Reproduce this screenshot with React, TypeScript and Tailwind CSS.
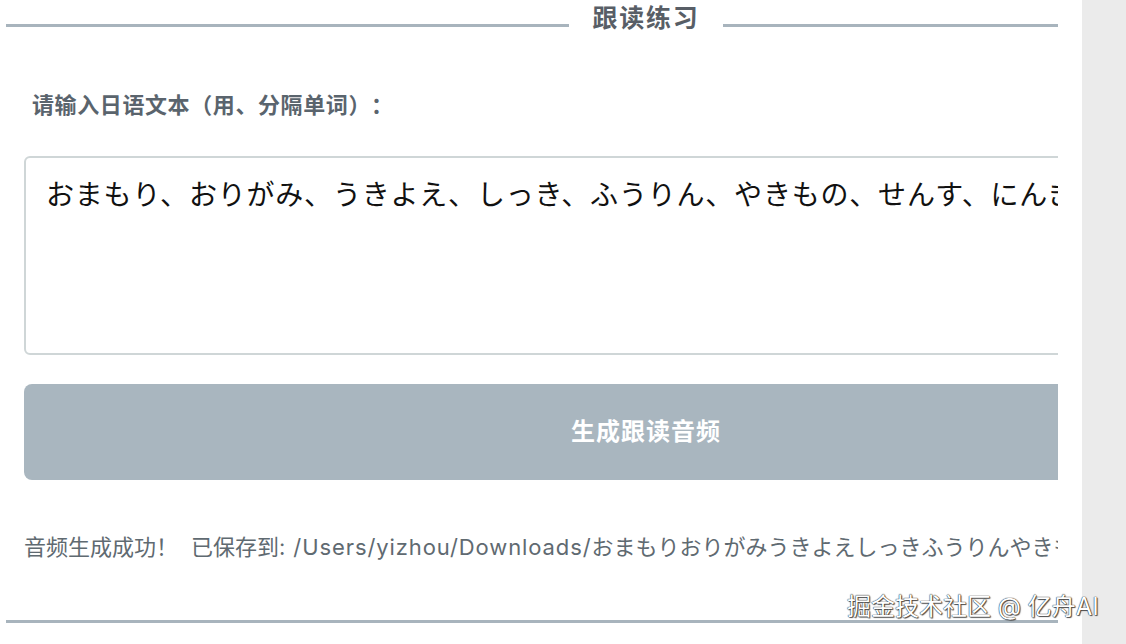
import React from "react";

const cjk = '"Noto Sans CJK SC", "Noto Sans CJK JP", sans-serif';

export default function App() {
  return (
    <div
      className="relative flex h-[644px] w-[1126px] overflow-hidden bg-white [text-spacing-trim:space-all]"
      style={{ fontFamily: `Inter, ${cjk}` }}
    >
      <div className="w-[1058px] shrink-0 overflow-hidden">
        <div className="ml-[6px] w-[1280px]">
          <div className="flex h-[36px] items-start">
            <div className="mt-[24px] h-[3px] flex-1 bg-[#a8b4bd]" />
            <div className="px-[23px] text-[25px] font-bold leading-[36px] tracking-[1.8px] text-[#585e66]">
              跟读练习
            </div>
            <div className="mt-[24px] h-[3px] flex-1 bg-[#a8b4bd]" />
          </div>
          <div className="px-[18px]">
            <div className="mt-[54px] pl-[8px] text-[22px] font-semibold leading-[30px] tracking-[0.6px] text-[#5a646d]">
              请输入日语文本（用、分隔单词）：
            </div>
            <textarea
              className="mt-[36px] block h-[199px] w-full resize-none rounded-[6px] border-2 border-[#cfd6d7] bg-white px-[20px] pt-[14px] text-[28px] leading-[42px] tracking-[0.8px] text-[#111111] outline-none [text-spacing-trim:space-all]"
              style={{ fontFamily: '"Noto Sans CJK JP", sans-serif' }}
              defaultValue="おまもり、おりがみ、うきよえ、しっき、ふうりん、やきもの、せんす、にんぎょう"
            />
            <button className="mt-[29px] flex h-[96px] w-full items-center justify-center rounded-[8px] bg-[#a9b6bf] text-[24px] font-bold tracking-[1px] text-white">
              生成跟读音频
            </button>
            <div className="mt-[52px] whitespace-nowrap text-[22px] leading-[30px] text-[#5f6a71]">
              音频生成成功！<span className="ml-[13px]">已保存到</span>
              <span className="tracking-[0.9px]">: /Users/yizhou/Downloads/</span>おまもりおりがみうきよえしっきふうりんやきものせんすにんぎょう.mp3
            </div>
          </div>
          <div className="mt-[58px] h-[3px] w-full bg-[#a8b4bd]" />
        </div>
      </div>
      <div className="w-[24px] shrink-0 bg-white" />
      <div className="flex-1 bg-[#ebebeb]" />
      <div className="absolute left-[847px] top-[592px] whitespace-nowrap text-[24px] leading-[30px] text-white [text-shadow:0_0_1px_#222,0_0_1px_#222,1px_1px_1px_#555]">
        掘金技术社区 @ 亿舟AI
      </div>
    </div>
  );
}
